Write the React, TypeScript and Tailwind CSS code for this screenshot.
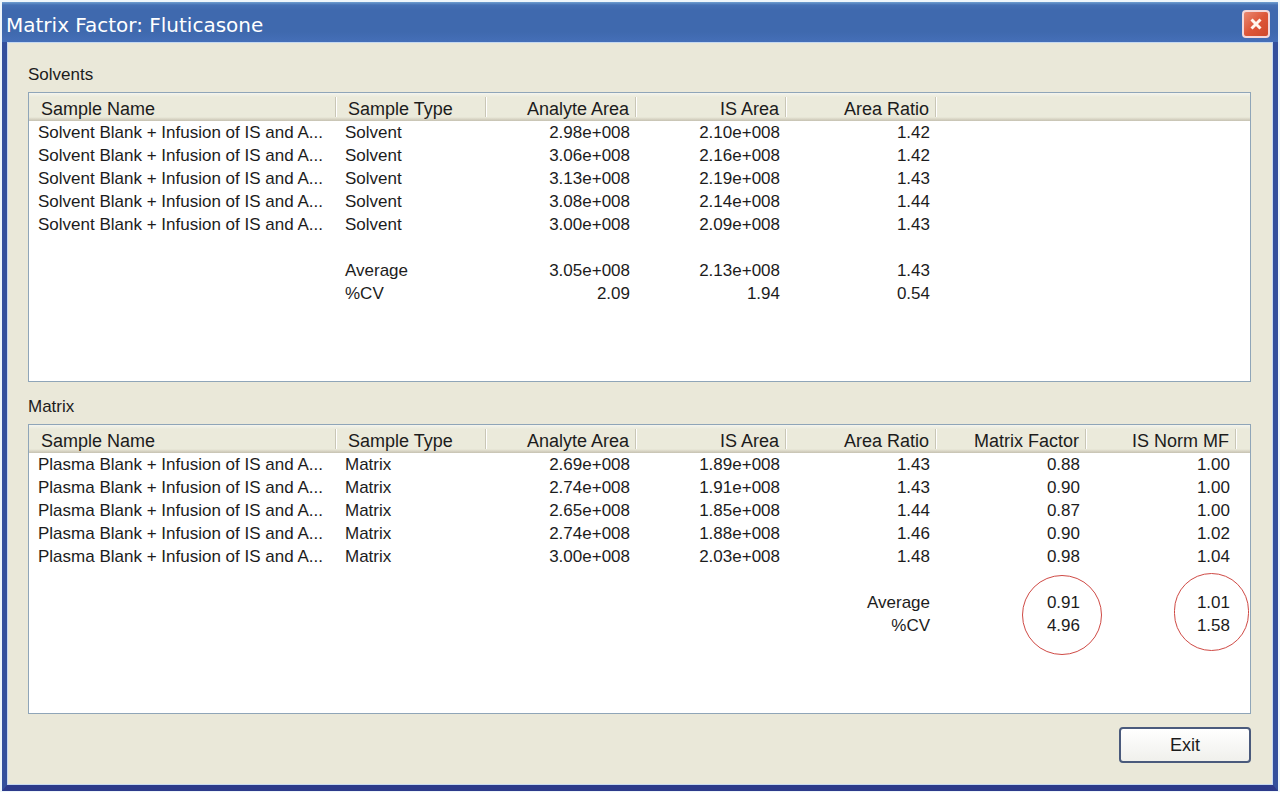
import clsx from 'clsx';

interface Column {
  label: string;
  align: 'left' | 'right';
}

interface ResultListProps {
  title: string;
  columns: Column[];
  rows: string[][];
  circled?: boolean;
}

const solventColumns: Column[] = [
  { label: 'Sample Name', align: 'left' },
  { label: 'Sample Type', align: 'left' },
  { label: 'Analyte Area', align: 'right' },
  { label: 'IS Area', align: 'right' },
  { label: 'Area Ratio', align: 'right' },
];

const matrixColumns: Column[] = [
  ...solventColumns,
  { label: 'Matrix Factor', align: 'right' },
  { label: 'IS Norm MF', align: 'right' },
];

const solventName = 'Solvent Blank + Infusion of IS and A...';
const plasmaName = 'Plasma Blank + Infusion of IS and A...';

const solventRows = [
  [solventName, 'Solvent', '2.98e+008', '2.10e+008', '1.42'],
  [solventName, 'Solvent', '3.06e+008', '2.16e+008', '1.42'],
  [solventName, 'Solvent', '3.13e+008', '2.19e+008', '1.43'],
  [solventName, 'Solvent', '3.08e+008', '2.14e+008', '1.44'],
  [solventName, 'Solvent', '3.00e+008', '2.09e+008', '1.43'],
  ['', '', '', '', ''],
  ['', 'Average', '3.05e+008', '2.13e+008', '1.43'],
  ['', '%CV', '2.09', '1.94', '0.54'],
];

const matrixRows = [
  [plasmaName, 'Matrix', '2.69e+008', '1.89e+008', '1.43', '0.88', '1.00'],
  [plasmaName, 'Matrix', '2.74e+008', '1.91e+008', '1.43', '0.90', '1.00'],
  [plasmaName, 'Matrix', '2.65e+008', '1.85e+008', '1.44', '0.87', '1.00'],
  [plasmaName, 'Matrix', '2.74e+008', '1.88e+008', '1.46', '0.90', '1.02'],
  [plasmaName, 'Matrix', '3.00e+008', '2.03e+008', '1.48', '0.98', '1.04'],
  ['', '', '', '', '', '', ''],
  ['', '', '', '', 'Average', '0.91', '1.01'],
  ['', '', '', '', '%CV', '4.96', '1.58'],
];

const AVERAGE_ROW = 6;

function ResultList({ title, columns, rows, circled }: ResultListProps) {
  const id = title.toLowerCase();

  return (
    <section className="flex flex-1 flex-col gap-1.5">
      <h2 id={id} className="leading-[22px]">
        {title}
      </h2>
      <div className="flex-1 overflow-hidden border border-[#8fa5b8] bg-white">
        <table aria-labelledby={id} className="w-full table-fixed whitespace-nowrap">
          <colgroup>
            <col className="w-[307px]" />
            {columns.slice(1).map((column) => (
              <col key={column.label} className="w-[150px]" />
            ))}
            <col />
          </colgroup>
          <thead>
            <tr className="h-7 bg-[linear-gradient(to_bottom,#f4f4ee_0,#ebeadb_4px,#ebeadb_24px,#d9d5c5_26px,#c6c2b2_28px)]">
              {columns.map((column) => (
                <th key={column.label} scope="col" className="p-0 text-lg font-normal">
                  <div
                    className={clsx(
                      'h-5 border-r border-[#c9c6b6] pt-0.5 leading-5 shadow-[1px_0_0_#ffffff]',
                      column.align === 'right' ? 'pr-1.5 text-right' : 'pl-3 text-left',
                    )}
                  >
                    {column.label}
                  </div>
                </th>
              ))}
              <td />
            </tr>
          </thead>
          <tbody>
            {rows.map((row, rowIndex) => (
              <tr key={rowIndex} className="h-[23px]">
                {row.map((value, index) => (
                  <td
                    key={columns[index].label}
                    className={clsx(
                      'relative p-0 leading-[23px]',
                      columns[index].align === 'right' ? 'pr-1.5 text-right' : 'pl-[9px]',
                    )}
                  >
                    {value}
                    {circled && rowIndex === AVERAGE_ROW && index === 5 && (
                      <span className="absolute -top-4 left-[86px] size-20 rounded-full border border-[#cf4a45]" />
                    )}
                    {circled && rowIndex === AVERAGE_ROW && index === 6 && (
                      <span className="absolute -top-[18px] left-[88px] h-[78px] w-[75px] rounded-full border border-[#cf4a45]" />
                    )}
                  </td>
                ))}
                <td />
              </tr>
            ))}
          </tbody>
        </table>
      </div>
    </section>
  );
}

function TitleBar() {
  return (
    <header className="flex h-10 items-center justify-between bg-[linear-gradient(to_bottom,#6f9fd0_0,#4470b4_3px,#3f69ae_8px,#3f69ae_30px,#456fb8_100%)] pr-2 pl-1">
      <h1 className="pt-1.5 font-['DejaVu_Sans','Liberation_Sans',sans-serif] text-xl leading-6 text-white">
        Matrix Factor: Fluticasone
      </h1>
      <button
        type="button"
        aria-label="Close"
        className="mt-1 flex size-7 items-center justify-center rounded-sm border-2 border-[#f3d8da] bg-linear-to-br from-[#e88872] via-[#dd5638] to-[#cf4a2b]"
      >
        <svg viewBox="0 0 12 12" className="size-3" fill="none" stroke="#fff8ee" strokeWidth="3">
          <path d="M1.5 1.5 10.5 10.5M10.5 1.5 1.5 10.5" />
        </svg>
      </button>
    </header>
  );
}

export default function App() {
  return (
    <div className="flex min-h-screen flex-col bg-[#eef6fb] pt-0.5 pr-0.5 pb-px pl-0.5 font-['Liberation_Sans',Arial,sans-serif] text-[17px] text-[#1c1c1c]">
      <TitleBar />
      <div className="flex flex-1 flex-col border-x-[5px] border-b-[6px] border-x-[#34509c] border-b-[#2c3a8a]">
        <main className="flex flex-1 flex-col border border-[#c5d8f0] bg-[#eae8d9] pt-[21px] pr-[21px] pb-[21px] pl-5">
          <div className="flex flex-1 flex-col gap-[14px]">
            <ResultList title="Solvents" columns={solventColumns} rows={solventRows} />
            <ResultList title="Matrix" columns={matrixColumns} rows={matrixRows} circled />
          </div>
          <div className="mt-[13px] flex justify-end">
            <button
              type="button"
              className="h-9 w-33 rounded border-2 border-[#4a5a7c] bg-linear-to-b from-white to-[#f0f0ec] text-lg"
            >
              Exit
            </button>
          </div>
        </main>
      </div>
    </div>
  );
}
